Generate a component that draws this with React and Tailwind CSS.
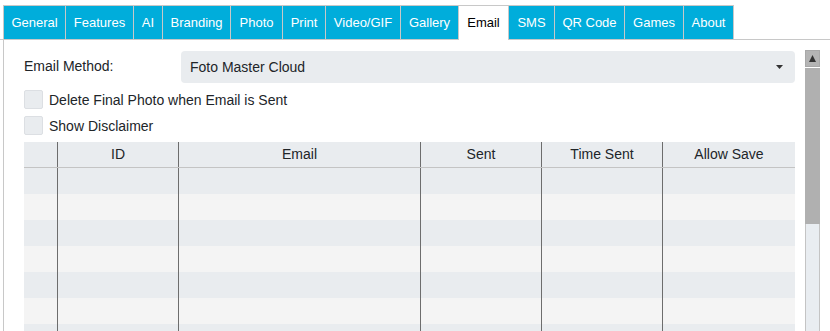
import React from 'react';

const tabs = [
  { label: 'General', w: 62 },
  { label: 'Features', w: 68 },
  { label: 'AI', w: 29 },
  { label: 'Branding', w: 68 },
  { label: 'Photo', w: 52 },
  { label: 'Print', w: 43 },
  { label: 'Video/GIF', w: 75 },
  { label: 'Gallery', w: 58 },
  { label: 'Email', w: 50, active: true },
  { label: 'SMS', w: 46 },
  { label: 'QR Code', w: 70 },
  { label: 'Games', w: 59 },
  { label: 'About', w: 51 },
];

const columns = [
  { label: '', w: 'w-[34px]' },
  { label: 'ID', w: 'w-[121px]' },
  { label: 'Email', w: 'w-[242px]' },
  { label: 'Sent', w: 'w-[121px]' },
  { label: 'Time Sent', w: 'w-[121px]' },
  { label: 'Allow Save', w: 'w-[132px]' },
];

const rows = [0, 1, 2, 3, 4, 5, 6];

const Checkbox = ({ label }) => (
  <label className="flex items-center h-[19px] gap-[6px]">
    <span className="w-[19px] h-[19px] bg-[#e9ecef] border border-[#dcdfe3] rounded-[2px]" />
    <span className="pt-[2px]">{label}</span>
  </label>
);

export default function App() {
  return (
    <div className="w-[830px] h-[331px] overflow-hidden bg-white text-[#212529] font-['Liberation_Sans',Arial,sans-serif]">
      {/* tab strip */}
      <div className="flex pl-[3px] pt-[5px] border-b border-[#c8c8c8] h-[40px]">
        {tabs.map((t, i) => (
          <div
            key={t.label}
            style={{ width: t.w }}
            className={`h-[34px] flex items-center justify-center text-[13px] border-t border-l border-[#c8c8c8] ${
              i === tabs.length - 1 ? 'border-r' : ''
            } ${t.active ? 'bg-white text-black h-[35px] -mb-px' : 'bg-[#00addb] text-white'}`}
          >
            {t.label}
          </div>
        ))}
      </div>

      <div className="flex ml-[3px] border-l border-[#c8c8c8] h-[291px]">
        <div className="flex-1 pl-[20px] pr-[10px] pt-[11px] text-[14px]">
          <div className="flex items-center h-[32px]">
            <div className="w-[157px] -mt-[2px]">Email Method:</div>
            <div className="flex-1 h-[32px] bg-[#e9ecef] rounded-[4px] flex items-center pl-[9px] pr-[12px]">
              <span className="flex-1">Foto Master Cloud</span>
              <svg width="7" height="4" viewBox="0 0 7 4" className="-mt-[1px]">
                <path d="M0 0h7L3.5 4z" fill="#333" />
              </svg>
            </div>
          </div>

          <div className="flex flex-col gap-[7px] mt-[7px]">
            <Checkbox label="Delete Final Photo when Email is Sent" />
            <Checkbox label="Show Disclaimer" />
          </div>

          <div className="mt-[7px]">
            <div className="flex h-[26px] bg-[#e9ecef] border-b border-[#c4c4c4]">
              {columns.map((c, i) => (
                <div
                  key={i}
                  className={`${c.w} flex items-center justify-center ${i < columns.length - 1 ? 'border-r border-[#6d6d6d]' : ''}`}
                >
                  {c.label}
                </div>
              ))}
            </div>
            {rows.map((r) => (
              <div key={r} className={`flex h-[26px] ${r % 2 === 0 ? 'bg-[#e9ecef]' : 'bg-[#f4f4f4]'}`}>
                {columns.map((c, i) => (
                  <div key={i} className={`${c.w} ${i < columns.length - 1 ? 'border-r border-[#6d6d6d]' : ''}`} />
                ))}
              </div>
            ))}
          </div>
        </div>

        {/* scrollbar */}
        <div className="w-[15px] mt-[10px] mr-[10px] flex flex-col">
          <div className="h-[17px] bg-[#b4b4b4] border border-[#a8a8a8] flex items-center justify-center">
            <svg width="7" height="7" viewBox="0 0 7 7">
              <path d="M3.5 0L7 7H0z" fill="#333" />
            </svg>
          </div>
          <div className="h-px bg-white" />
          <div className="h-[156px] bg-[#b0b0b0]" />
          <div className="flex-1 bg-[#e9edf1] border-x border-[#c4c4c4]" />
        </div>
      </div>
    </div>
  );
}
